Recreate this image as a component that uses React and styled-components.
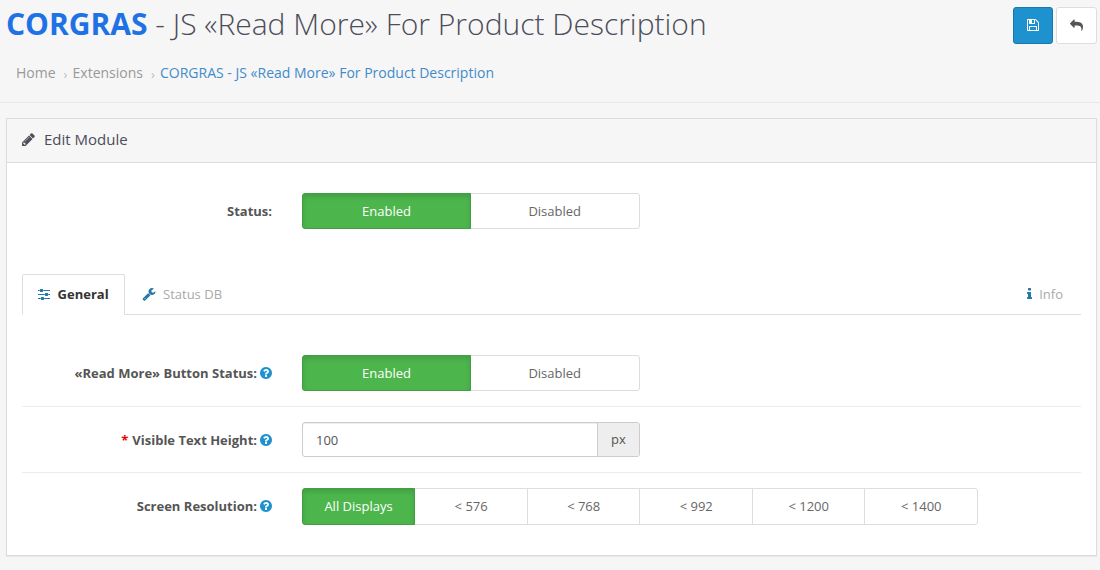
import React from "react";
import styled, { createGlobalStyle, css } from "styled-components";

const Global = createGlobalStyle`
  *, *::before, *::after { box-sizing: border-box; }
  body {
    margin: 0;
    background: #f6f6f6;
    color: #666;
    font: 13px/20px "Open Sans", "Noto Sans", sans-serif;
    overflow: hidden;
  }
`;

const Page = styled.main`
  display: flex;
  flex-direction: column;
  height: 570px;
`;

const Header = styled.header`
  display: flex;
  justify-content: space-between;
  height: 103px;
  padding: 7px 3px 0 6px;
  border-bottom: 1px solid #e8e8e8;
`;

const Title = styled.h1`
  margin: 0;
  font-size: 30px;
  line-height: 34px;
  font-weight: 300;
  color: #4c4d5a;
  white-space: nowrap;
`;

const Brand = styled.b`
  font-weight: 700;
  color: #1f72e5;
`;

const Breadcrumb = styled.nav`
  display: flex;
  align-items: center;
  margin: 21px 0 0 10px;
  font-size: 14px;
  line-height: 20px;
  white-space: nowrap;
`;

const Crumb = styled.a`
  color: ${(p) => (p.$active ? "#428bca" : "#999")};
`;

const Separator = styled.span`
  width: 17px;
  padding: 2px 0 0 8px;
  font-size: 13px;
  color: #bbb;
`;

const Actions = styled.div`
  display: flex;
  gap: 3px;
`;

const ActionButton = styled.button`
  display: flex;
  align-items: center;
  justify-content: center;
  width: ${(p) => (p.$primary ? 40 : 41)}px;
  height: 37px;
  padding: 0 1px 1px 0;
  border: 1px solid ${(p) => (p.$primary ? "#1978ab" : "#ddd")};
  border-radius: 3px;
  background: ${(p) => (p.$primary ? "#1e91cf" : "#fff")};
  color: ${(p) => (p.$primary ? "#fff" : "#555")};
`;

const Panel = styled.section`
  width: 1091px;
  height: 438px;
  margin: 15px 0 0 6px;
  border: 1px solid #dcdcdc;
  background: #fff;
  box-shadow: 0 1px 1px rgba(0, 0, 0, 0.05);
`;

const PanelHeading = styled.h3`
  display: flex;
  align-items: center;
  gap: 8px;
  height: 44px;
  margin: 0;
  padding: 0 14px 3px;
  border-bottom: 1px solid #dcdcdc;
  background: #f6f6f6;
  color: #4c4d5a;
  font-size: 15px;
  font-weight: 400;
`;

const PanelBody = styled.div`
  padding: 15px 15px 0;
`;

const FormRow = styled.div`
  display: flex;
  align-items: center;
  height: ${(p) => p.$height || 66}px;
  border-top: ${(p) => (p.$divided ? "1px solid #ededed" : "0")};
`;

const Label = styled.label`
  display: flex;
  align-items: center;
  justify-content: flex-end;
  width: 250px;
  margin-right: 30px;
  padding-bottom: ${(p) => (p.$raised ? 1 : 0)}px;
  color: #555;
  font-weight: 700;
  white-space: nowrap;
`;

const Required = styled.span`
  margin-right: 4px;
  color: #e00;
`;

const Help = styled.span`
  display: flex;
  margin: 0 -1px 0 2px;
  color: #1e91cf;
`;

const ButtonGroup = styled.div`
  display: flex;
  width: ${(p) => p.$width}px;
  height: ${(p) => p.$height || 36}px;
  border: 1px solid #ddd;
  border-radius: 3px;
`;

const Option = styled.button`
  flex: 1 1 0;
  padding: 0 0 ${(p) => (p.$raised ? 1 : 0)}px;
  border: 0;
  border-left: ${(p) => (p.$divided ? "1px solid #ddd" : "0")};
  background: transparent;
  color: #666;
  font: inherit;
  ${(p) =>
    p.$active &&
    css`
      position: relative;
      flex: 0 0 ${p.$activeWidth}px;
      margin: -1px -0.6px -1px -1px;
      border: 1px solid #439e43;
      border-radius: 3px 0 0 3px;
      background: #4cb64c;
      box-shadow: inset 0 3px 5px rgba(0, 0, 0, 0.125);
      color: #fff;
    `}
`;

const Tabs = styled.div`
  display: flex;
  height: 41px;
  margin-top: 30px;
  margin-bottom: 25px;
  border-bottom: 1px solid #ddd;
`;

const Tab = styled.a`
  display: flex;
  align-items: center;
  gap: 7px;
  height: 41px;
  padding: 0 16px 2px;
  border: 1px solid transparent;
  color: #aaa;
  ${(p) =>
    p.$active &&
    css`
      gap: 7.6px;
      border-color: #ddd;
      border-bottom-color: #fff;
      border-radius: 2px 2px 0 0;
      padding: 0 15.4px 2px 15px;
      background: #fff;
      color: #333;
      font-weight: 700;
    `}
  ${(p) =>
    p.$end &&
    css`
      margin-left: auto;
      padding-right: 17px;
    `}
  svg { color: #2478a8; }
`;

const InputGroup = styled.div`
  display: flex;
  width: 338px;
  height: 35px;
  border: 1px solid #ccc;
  border-radius: 3px;
  box-shadow: inset 0 1px 1px rgba(0, 0, 0, 0.075);
  overflow: hidden;
`;

const Input = styled.input`
  flex: 1;
  min-width: 0;
  padding: 0 13px;
  border: 0;
  background: transparent;
  color: #555;
  font: inherit;
`;

const Addon = styled.span`
  display: flex;
  align-items: center;
  justify-content: center;
  width: 42px;
  padding-bottom: 2px;
  border-left: 1px solid #ccc;
  background: #eee;
  color: #555;
`;

const shapes = {
  save: [1792, "M512 1536h768v-384h-768v384zm896 0h128v-896q0-14-10-38.500t-20-34.500l-281-281q-10-10-34-20t-39-10v416q0 40-28 68t-68 28h-576q-40 0-68-28t-28-68v-416h-128v1280h128v-416q0-40 28-68t68-28h832q40 0 68 28t28 68v416zm-384-928v-320q0-13-9.500-22.500t-22.500-9.500h-192q-13 0-22.500 9.500t-9.500 22.500v320q0 13 9.500 22.500t22.500 9.500h192q13 0 22.500-9.500t9.500-22.500zm640 32v928q0 40-28 68t-68 28h-1344q-40 0-68-28t-28-68v-1344q0-40 28-68t68-28h928q40 0 88 20t76 48l280 280q28 28 48 76t20 88z"],
  reply: [1792, "M1792 1120q0 166-127 451-3 7-10.500 24t-13.500 30-13 22q-12 17-28 17-15 0-23.500-10t-8.500-25q0-9 2.500-26.500t2.500-23.500q5-68 5-123 0-101-17.500-181t-48.500-138.500-80-101-105.500-69.500-133-42.500-154-21.500-175.500-6h-224v256q0 26-19 45t-45 19-45-19l-512-512q-19-19-19-45t19-45l512-512q19-19 45-19t45 19 19 45v256h224q713 0 875 403 53 134 53 333z"],
  pencil: [1792, "M491 1536l91-91-235-235-91 91v107h128v128h107zm523-928q0-22-22-22-10 0-17 7l-542 542q-7 7-7 17 0 22 22 22 10 0 17-7l542-542q7-7 7-17zm-54-192l416 416-832 832h-416v-416zm683 96q0 53-37 90l-166 166-416-416 166-165q36-38 90-38 53 0 91 38l235 234q37 39 37 91z"],
  sliders: [1536, "M352 1408v128h-352v-128h352zm352-128q26 0 45 19t19 45v256q0 26-19 45t-45 19h-256q-26 0-45-19t-19-45v-256q0-26 19-45t45-19h256zm160-384v128h-864v-128h864zm-640-512v128h-224v-128h224zm1312 1024v128h-736v-128h736zm-960-1152q26 0 45 19t19 45v256q0 26-19 45t-45 19h-256q-26 0-45-19t-19-45v-256q0-26 19-45t45-19h256zm640 512q26 0 45 19t19 45v256q0 26-19 45t-45 19h-256q-26 0-45-19t-19-45v-256q0-26 19-45t45-19h256zm320 128v128h-224v-128h224zm0-512v128h-864v-128h864z"],
  wrench: [1792, "M448 1472q0-26-19-45t-45-19-45 19-19 45 19 45 45 19 45-19 19-45zm644-420l-682 682q-37 37-90 37-52 0-91-37l-106-108q-38-36-38-90 0-53 38-91l681-681q39 98 114.500 173.500t173.500 114.500zm634-435q0 39-23 106-47 134-164.500 217.500t-258.500 83.500q-185 0-316.500-131.500t-131.500-316.500 131.500-316.500 316.500-131.500q58 0 121.500 16.500t107.500 46.500q16 11 16 28t-16 28l-293 169v224l193 107q5-3 79-48.500t135.500-81 70.500-35.500q15 0 23.500 10t8.500 25z"],
  info: [640, "M640 1344v128q0 26-19 45t-45 19h-512q-26 0-45-19t-19-45v-128q0-26 19-45t45-19h64v-384h-64q-26 0-45-19t-19-45v-128q0-26 19-45t45-19h384q26 0 45 19t19 45v576h64q26 0 45 19t19 45zm-128-1152v192q0 26-19 45t-45 19h-256q-26 0-45-19t-19-45v-192q0-26 19-45t45-19h256q26 0 45 19t19 45z"],
  help: [1792, "M1024 1376v-192q0-14-9-23t-23-9h-192q-14 0-23 9t-9 23v192q0 14 9 23t23 9h192q14 0 23-9t9-23zm256-672q0-88-55.500-163t-138.500-116-170-41q-243 0-371 213-15 24 8 42l132 100q7 6 19 6 16 0 25-12 53-68 86-92 34-24 86-24 48 0 85.500 26t37.500 59q0 38-20 61t-68 45q-63 28-115.500 86.500t-52.500 125.500v36q0 14 9 23t23 9h192q14 0 23-9t9-23q0-19 21.500-49.500t54.500-49.500q32-18 49-28.500t46-35 44.500-48 28-60.500 12.500-81zm384 192q0 209-103 385.500t-279.500 279.500-385.500 103-385.500-103-279.500-279.500-103-385.500 103-385.500 279.500-279.500 385.500-103 385.500 103 279.500 279.500 103 385.500z"],
};

function Icon({ name, size = 14 }) {
  const [w, d] = shapes[name];
  return (
    <svg width={(size * w) / 1792} height={size} viewBox={`0 0 ${w} 1792`} fill="currentColor" aria-hidden="true">
      <path d={d} />
    </svg>
  );
}

const HelpIcon = () => (
  <Help>
    <Icon name="help" />
  </Help>
);

const StatusToggle = () => (
  <ButtonGroup $width={338}>
    <Option $active $activeWidth={169}>
      Enabled
    </Option>
    <Option>Disabled</Option>
  </ButtonGroup>
);

const resolutions = ["All Displays", "< 576", "< 768", "< 992", "< 1200", "< 1400"];

export default function App() {
  return (
    <Page>
      <Global />
      <Header>
        <div>
          <Title>
            <Brand>CORGRAS</Brand> - JS «Read More» For Product Description
          </Title>
          <Breadcrumb>
            <Crumb>Home</Crumb>
            <Separator>›</Separator>
            <Crumb>Extensions</Crumb>
            <Separator>›</Separator>
            <Crumb $active>CORGRAS - JS «Read More» For Product Description</Crumb>
          </Breadcrumb>
        </div>
        <Actions>
          <ActionButton $primary aria-label="Save">
            <Icon name="save" />
          </ActionButton>
          <ActionButton aria-label="Back">
            <Icon name="reply" size={13} />
          </ActionButton>
        </Actions>
      </Header>
      <Panel>
        <PanelHeading>
          <Icon name="pencil" size={15} />
          Edit Module
        </PanelHeading>
        <PanelBody>
          <FormRow>
            <Label>Status:</Label>
            <StatusToggle />
          </FormRow>
          <Tabs>
            <Tab $active>
              <Icon name="sliders" />
              General
            </Tab>
            <Tab>
              <Icon name="wrench" />
              Status DB
            </Tab>
            <Tab $end>
              <Icon name="info" />
              Info
            </Tab>
          </Tabs>
          <FormRow>
            <Label>
              «Read More» Button Status:
              <HelpIcon />
            </Label>
            <StatusToggle />
          </FormRow>
          <FormRow $divided>
            <Label>
              <Required>*</Required>
              Visible Text Height:
              <HelpIcon />
            </Label>
            <InputGroup>
              <Input defaultValue="100" />
              <Addon>px</Addon>
            </InputGroup>
          </FormRow>
          <FormRow $divided $height={68}>
            <Label $raised>
              Screen Resolution:
              <HelpIcon />
            </Label>
            <ButtonGroup $width={676} $height={37}>
              {resolutions.map((r, i) => (
                <Option key={r} $raised $active={i === 0} $activeWidth={113} $divided={i > 0}>
                  {r}
                </Option>
              ))}
            </ButtonGroup>
          </FormRow>
        </PanelBody>
      </Panel>
    </Page>
  );
}
